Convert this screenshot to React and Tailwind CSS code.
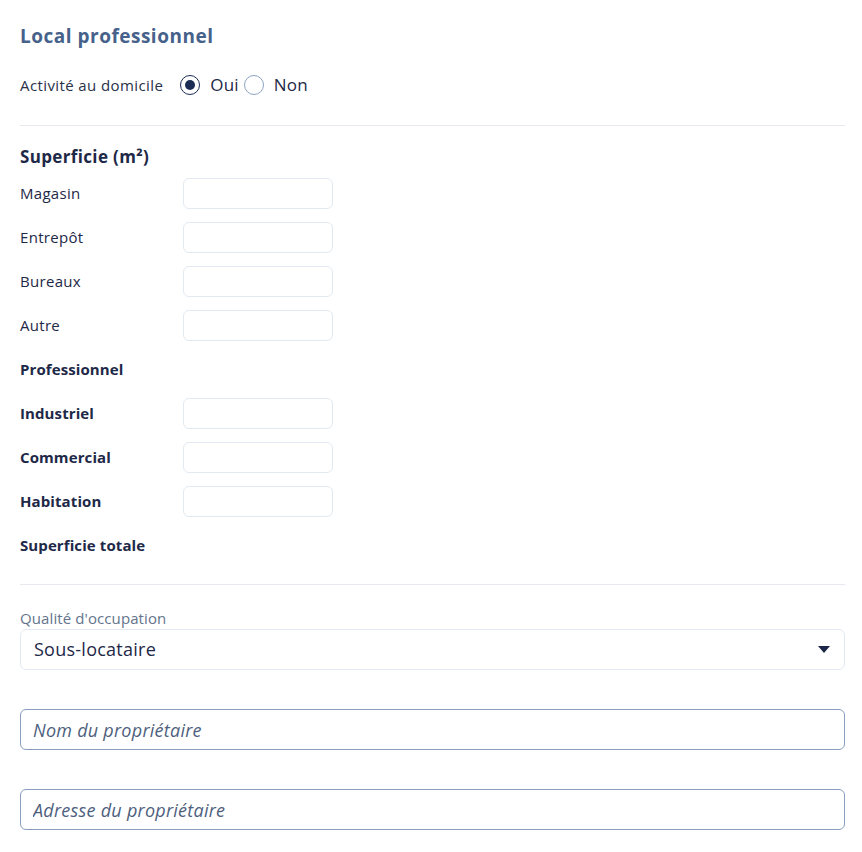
const font = { fontFamily: '"Open Sans", "Noto Sans", sans-serif' };

const Field = ({ label, bold }) => (
  <div className="flex items-center h-[31px] mb-[13px]">
    <span
      className={`w-[163px] text-[15px] text-[#1e2847] ${bold ? 'font-bold tracking-[0.1px]' : 'tracking-[0.3px]'}`}
    >
      {label}
    </span>
    <input className="w-[150px] h-[31px] rounded-[6px] border border-[#e3e9f2] bg-white outline-none" />
  </div>
);

const Radio = ({ checked, label }) => (
  <label className="flex items-center gap-[10px] text-[17px] tracking-[0.2px] text-[#1e2847]">
    <span
      className={`w-[20px] h-[20px] rounded-full border-[1.5px] flex items-center justify-center ${
        checked ? 'border-[#1b2c55]' : 'border-[#8ea3c4]'
      }`}
    >
      {checked && <span className="w-[10px] h-[10px] rounded-full bg-[#1b2c55]" />}
    </span>
    {label}
  </label>
);

export default function App() {
  return (
    <div className="bg-white min-h-[852px] pl-[20px] pr-[17px] pt-[24px]" style={font}>
      <h2 className="text-[19px] font-bold tracking-[0.5px] text-[#46618a] leading-[24px]">Local professionnel</h2>

      <div className="flex items-center mt-[25px] h-[24px]">
        <span className="text-[15px] tracking-[0.4px] text-[#283149] mr-[17px]">Activité au domicile</span>
        <div className="flex items-center gap-[5px]">
          <Radio checked label="Oui" />
          <Radio label="Non" />
        </div>
      </div>

      <div className="border-t border-[#e6e9ef] mt-[28px]" />

      <h3 className="text-[17px] font-bold tracking-[0.35px] text-[#1e2847] mt-[20px] leading-[22px]">Superficie (m²)</h3>

      <div className="mt-[10px]">
        <Field label="Magasin" />
        <Field label="Entrepôt" />
        <Field label="Bureaux" />
        <Field label="Autre" />
        <div className="h-[31px] mb-[13px] flex items-center text-[15px] font-bold tracking-[0.1px] text-[#1e2847]">
          Professionnel
        </div>
        <Field label="Industriel" bold />
        <Field label="Commercial" bold />
        <Field label="Habitation" bold />
        <div className="h-[31px] flex items-center text-[15px] font-bold tracking-[0.1px] text-[#1e2847]">
          Superficie totale
        </div>
      </div>

      <div className="border-t border-[#e6e9ef] mt-[23px]" />

      <div className="mt-[24px] text-[15px] tracking-[0.1px] text-[#64748b] leading-[18px]">Qualité d'occupation</div>
      <div className="mt-[2px] h-[41px] rounded-[6px] border border-[#e3e9f2] flex items-center justify-between pl-[13px] pr-[14px]">
        <span className="text-[18px] tracking-[0.25px] text-[#1e2847]">Sous-locataire</span>
        <svg width="12" height="7" viewBox="0 0 12 7">
          <path d="M0 0 L12 0 L6 7 Z" fill="#1b2545" />
        </svg>
      </div>

      <input
        placeholder="Nom du propriétaire"
        className="mt-[39px] w-full h-[41px] rounded-[6px] border border-[#8a9ebd] px-[12px] text-[18px] tracking-[0.25px] italic placeholder:text-[#4e5f7e] outline-none"
      />
      <input
        placeholder="Adresse du propriétaire"
        className="mt-[39px] w-full h-[41px] rounded-[6px] border border-[#8a9ebd] px-[12px] text-[18px] tracking-[0.25px] italic placeholder:text-[#4e5f7e] outline-none"
      />
    </div>
  );
}
